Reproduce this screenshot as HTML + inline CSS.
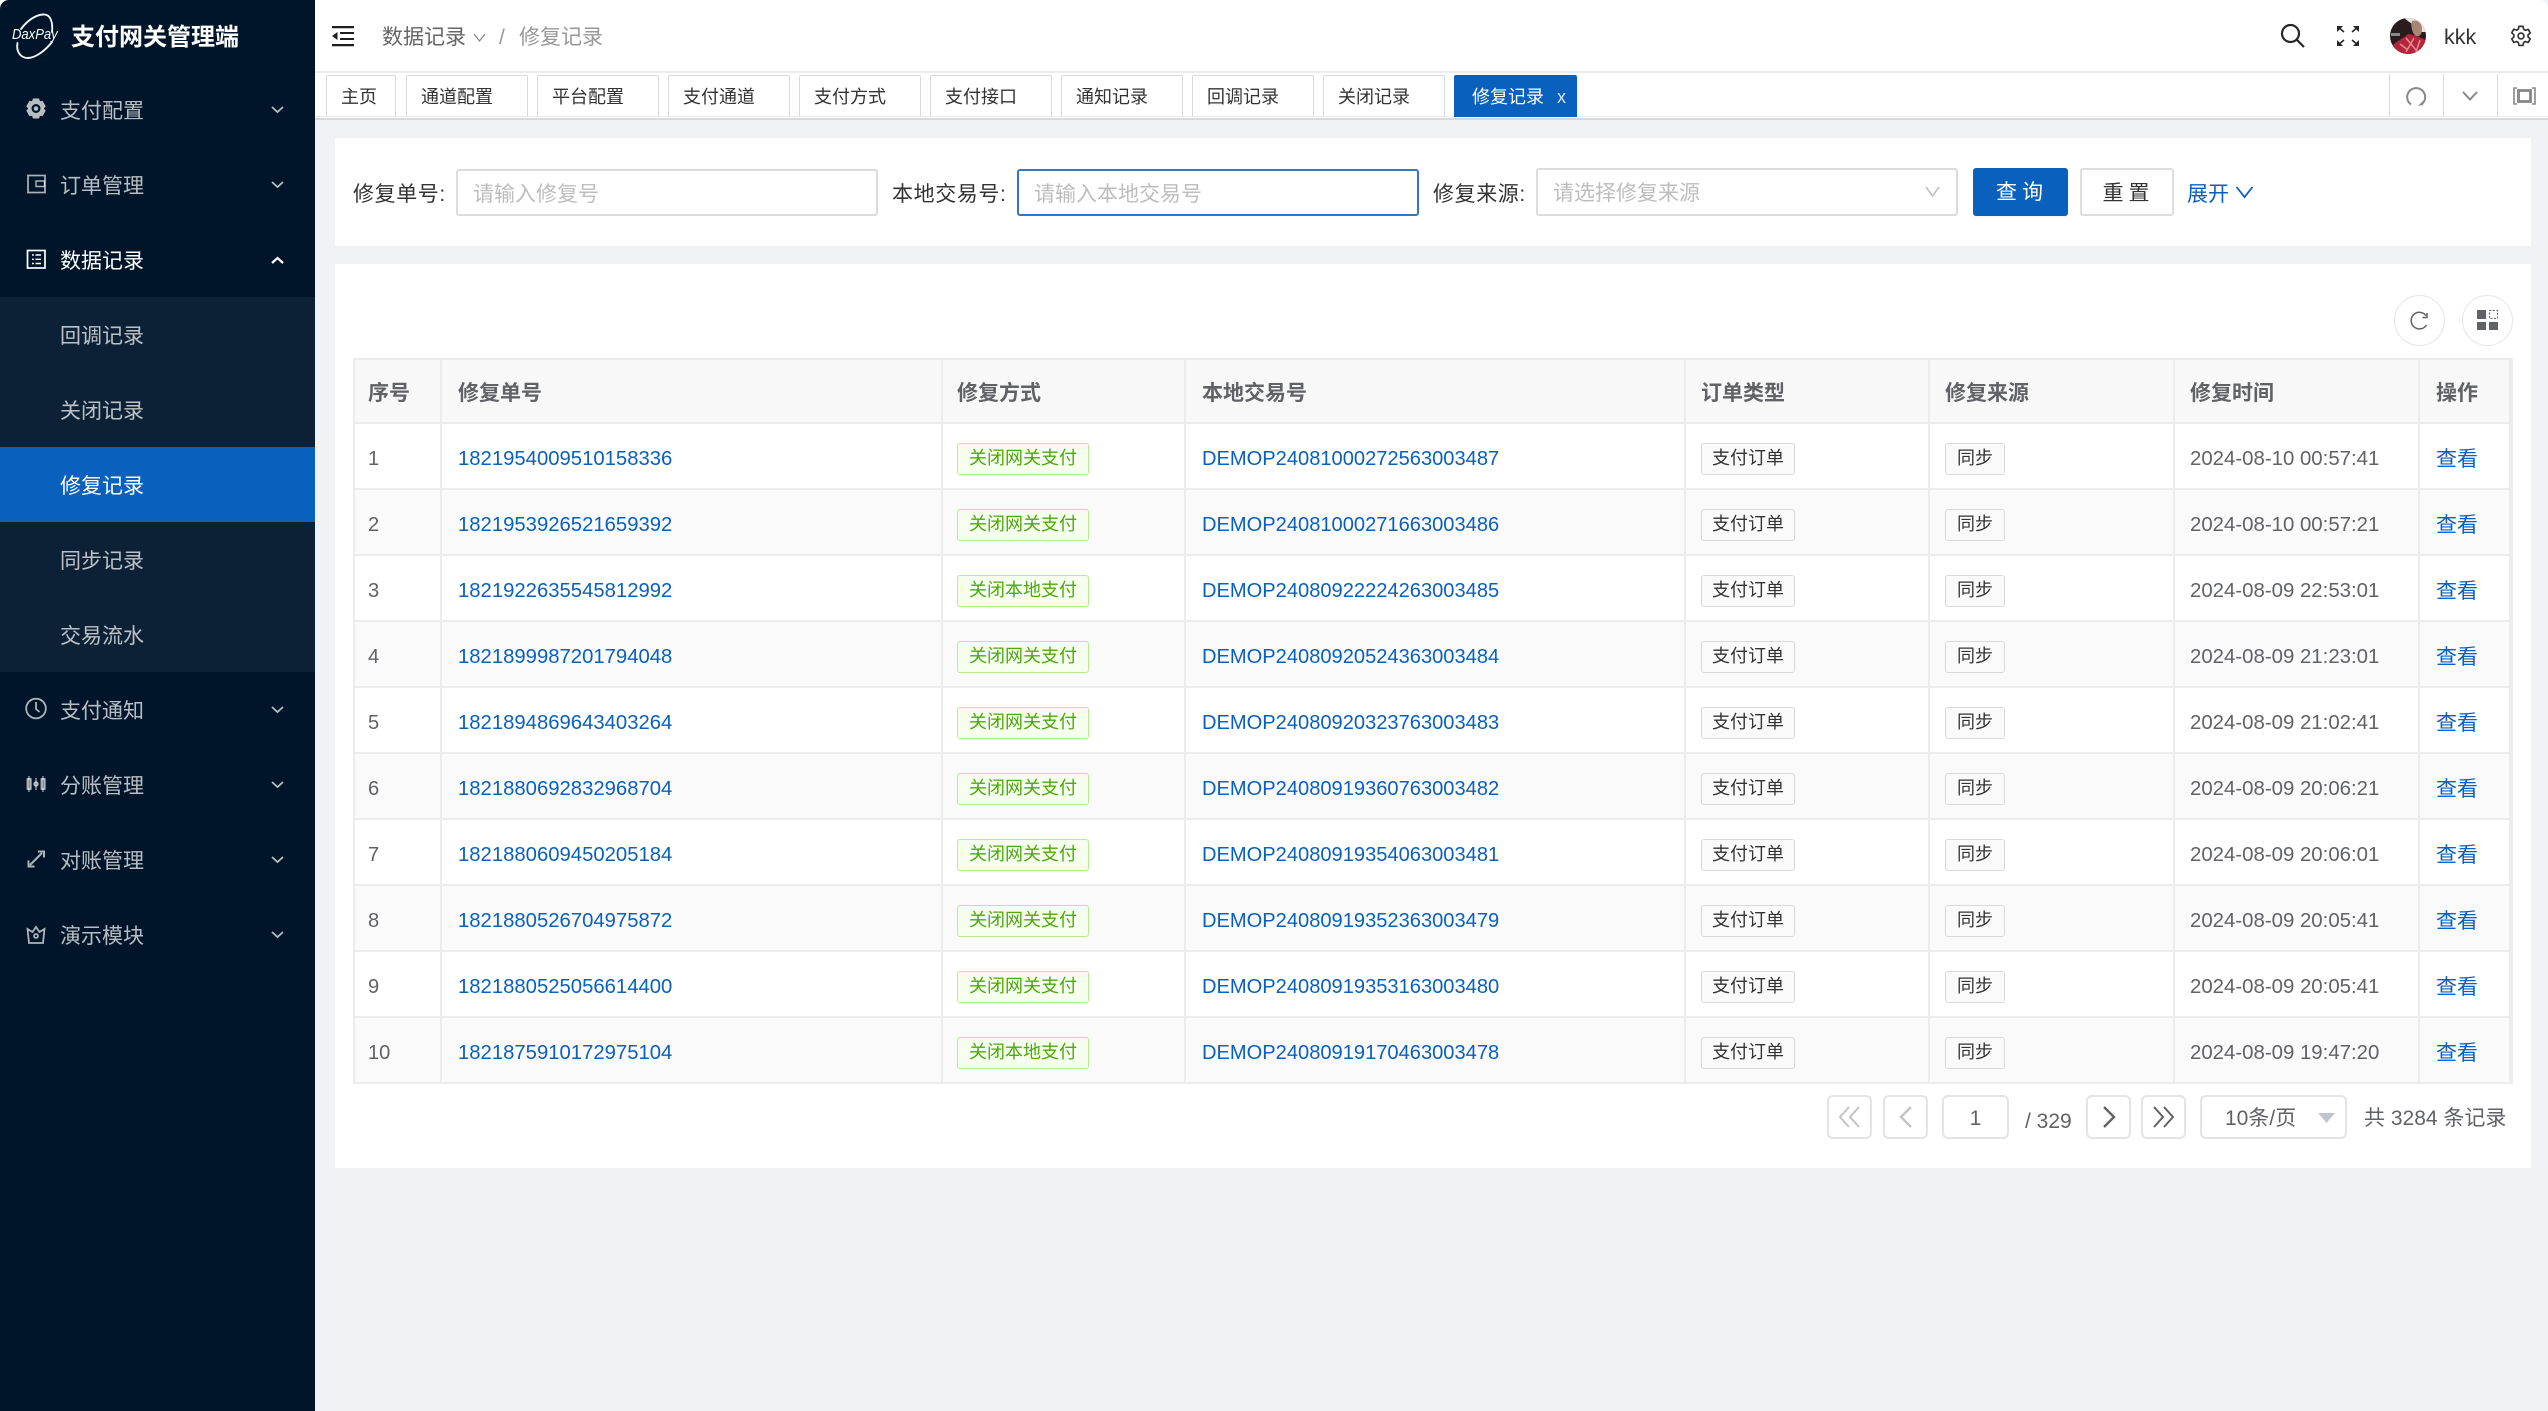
<!DOCTYPE html>
<html lang="zh-CN"><head><meta charset="utf-8"><title>支付网关管理端</title>
<style>
*{box-sizing:border-box;margin:0;padding:0}
html,body{width:2548px;height:1411px;overflow:hidden;background:#f0f2f5;font-family:"Liberation Sans","Noto Sans CJK SC",sans-serif;color:#333}
.a{position:absolute;white-space:nowrap}
svg{position:absolute;overflow:visible}
#side{position:absolute;left:0;top:0;width:315px;height:1411px;background:#001529;border-top-left-radius:9px}
#corner{position:absolute;left:0;top:0;width:12px;height:12px;background:#fff}
.m{position:absolute;left:60px;margin-top:2px;font-size:21px;line-height:30px;color:rgba(255,255,255,.72)}
.bar{position:absolute;left:0;width:315px;height:75px}
.tab{position:absolute;top:75px;height:42px;border:1px solid #d9d9d9;border-bottom-color:#e8e8e8;background:#fff;border-radius:2px 2px 0 0;font-size:18px;line-height:43px;padding-left:14px;color:#333}
.in{position:absolute;top:169px;height:47px;background:#fff;border:2px solid #dcdcdc;border-radius:3px;font-size:21px;line-height:47px;padding-left:15px;color:#bdbdbd}
.lb{position:absolute;top:180px;font-size:21px;line-height:30px;color:#333;letter-spacing:.6px}
table{position:absolute;left:353px;top:358px;width:2158px;table-layout:fixed;border-collapse:separate;border-spacing:0;background:#fff}
th,td{border-right:2px solid #ececec;border-bottom:2px solid #ececec;text-align:left;padding-left:16px;white-space:nowrap;overflow:hidden}
th{height:66px;background:#f8f8f9;font-size:21px;font-weight:bold;color:#606266;border-top:2px solid #ececec;padding-top:2px}
td{height:66px;font-size:20.100px;color:#606266;padding-top:6px}
th:first-child,td:first-child{border-left:2px solid #ececec;padding-left:13px}
th:nth-child(3),td:nth-child(3){padding-left:14px}
th:nth-child(5),td:nth-child(5),th:nth-child(6),td:nth-child(6){padding-left:15px}
th:nth-child(7),td:nth-child(7){padding-left:15px}
td:nth-child(7){font-size:20.400px}
td:nth-child(2){font-size:20.300px}
tr:nth-child(even) td{background:#fafafa}
td a{color:#0960bd;text-decoration:none}
td.v{padding-top:4px}
td.v a{font-size:21px}
.t{display:inline-block;height:32px;line-height:29px;padding:0 10px;font-size:18px;border:1px solid #d9d9d9;background:#fafafa;border-radius:3px;color:#333;vertical-align:middle}
td:nth-child(6) .t,.g{padding:0 11px}
.g{border-color:#b7eb8f;background:#f6ffed;color:#4ba80f}
.pg{position:absolute;top:1095px;height:44px;border:2px solid #e4e4e8;border-radius:6px;background:#fff;font-size:21px;line-height:44px;text-align:center;color:#606266}
</style></head><body>

<div style="position:absolute;left:315px;top:0;width:2233px;height:73px;background:#fff;border-bottom:2px solid #ececec;border-top-right-radius:9px"></div>
<div style="position:absolute;left:315px;top:73px;width:2233px;height:47px;background:#fff;border-bottom:2px solid #d9d9d9"></div>
<div style="position:absolute;left:315px;top:116px;width:2233px;height:1px;background:#ececec"></div>

<div id="corner"></div>
<div id="side">
<svg style="left:0;top:0" width="70" height="70" fill="none" stroke="#f2f3f5" stroke-width="1.900" stroke-linecap="round">
<path d="M21 29C27 21 35 15 43 14.500C51 14 53 23 52 32"/>
<path d="M17.500 43C16 51 20 58 28 58C35 58 45 51 52 42"/>
</svg>
<div class="a" style="left:12px;top:26px;font-size:14.500px;line-height:18px;font-style:italic;color:#fff;transform:scaleX(.9);transform-origin:left center">DaxPay</div>
<div class="a" style="left:71px;top:20px;font-size:24px;line-height:36px;font-weight:bold;color:#fff">支付网关管理端</div>

<div class="bar" style="top:297px;height:375px;background:#0c2135"></div>
<div class="bar" style="top:447px;background:#0960bd"></div>

<div class="m" style="top:95px">支付配置</div>
<div class="m" style="top:170px">订单管理</div>
<div class="m" style="top:245px;color:#fff">数据记录</div>
<div class="m" style="top:320px">回调记录</div>
<div class="m" style="top:395px">关闭记录</div>
<div class="m" style="top:470px;color:#fff">修复记录</div>
<div class="m" style="top:545px">同步记录</div>
<div class="m" style="top:620px">交易流水</div>
<div class="m" style="top:695px">支付通知</div>
<div class="m" style="top:770px">分账管理</div>
<div class="m" style="top:845px">对账管理</div>
<div class="m" style="top:920px">演示模块</div>

<svg style="left:0;top:0" width="315" height="960" fill="none" stroke="rgba(255,255,255,.68)" stroke-width="1.800">
<path fill-rule="evenodd" stroke="none" fill="rgba(255,255,255,.72)" d="M33 98.500h6l1 2.800 2.500-.6 3.200 5.500-1.800 2.300 1.800 2.300-3.200 5.500-2.500-.6-1 2.800h-6l-1-2.800-2.500.6-3.200-5.500 1.800-2.300-1.800-2.300 3.200-5.500 2.500.6zM36 104a4.500 4.500 0 1 0 0 9a4.500 4.500 0 0 0 0-9z"/>
<circle cx="36" cy="108.500" r="2.300" fill="rgba(255,255,255,.72)" stroke="none"/>
<rect x="28" y="175.500" width="17" height="17" stroke-width="1.700"/>
<path d="M36 181h8.500v5.500H36z" stroke-width="1.400"/>
<rect x="27.500" y="250.500" width="17.500" height="17.500" stroke="#fff" stroke-width="1.700"/>
<path d="M32 255h1.800M35.500 255h5.500M32 259.300h1.800M35.500 259.300h5.500M32 263.500h1.800M35.500 263.500h5.500" stroke="#fff" stroke-width="1.400"/>
<circle cx="36" cy="708.500" r="9.800"/><path d="M36 702v7l3.500 3"/>
<path d="M29 776v16M36 778v12M43 776v16" stroke-width="1.200"/>
<rect x="27.500" y="779" width="3.200" height="10" /><circle cx="36" cy="784" r="1.800"/><rect x="41.500" y="779" width="3.200" height="10"/>
<path d="M30 865l12-12M38 851.500h6v6M28.500 860.500v6h6" stroke-width="2"/>
<path d="M27.500 929l5 3 3.500-5 3.500 5 5-3-1.500 14h-14z"/><circle cx="36" cy="936" r="2"/>
<g stroke="rgba(255,255,255,.72)" stroke-width="1.800">
<path d="M272 107l5.500 5 5.500-5M272 182l5.500 5 5.500-5"/>
<path d="M272 263l5.500-5 5.500 5" stroke="#fff" stroke-width="2.200"/>
<path d="M272 707l5.500 5 5.500-5M272 782l5.500 5 5.500-5M272 857l5.500 5 5.500-5M272 932l5.500 5 5.500-5"/>
</g>
</svg>
</div>

<!-- header -->
<svg style="left:332px;top:26px" width="24" height="22" fill="#1f1f1f" stroke="none">
<path d="M0 0h22v2.200H0zM0 18h22v2.200H0zM8 6h14v2H8zM8 12h14v2H8zM5.500 6v8L0 10z"/>
</svg>
<div class="a" style="left:382px;top:23px;font-size:21px;line-height:30px;color:#666">数据记录</div>
<svg style="left:473px;top:33px" width="13" height="9" fill="none" stroke="#888" stroke-width="1.300"><path d="M1 1l5.500 7 5.500-7"/></svg>
<div class="a" style="left:499px;top:23px;font-size:21px;line-height:30px;color:#999">/</div>
<div class="a" style="left:519px;top:23px;font-size:21px;line-height:30px;color:#999">修复记录</div>

<svg style="left:2281px;top:24px" width="24" height="24" fill="none" stroke="#262626" stroke-width="2.200"><circle cx="9.500" cy="9.500" r="8.500"/><path d="M15.500 15.500l7.500 7.500"/></svg>
<svg style="left:2337px;top:26px" width="22" height="20" fill="#262626" stroke="#262626" stroke-width="1.600">
<path d="M1 1l6 5M21 1l-6 5M1 19l6-5M21 19l-6-5" fill="none"/>
<path stroke="none" d="M0 0h6L0 6zM22 0h-6l6 6zM0 20h6L0 14zM22 20h-6l6-6z"/>
</svg>
<svg style="left:2390px;top:18px" width="36" height="36">
<defs><clipPath id="av"><circle cx="18" cy="18" r="18"/></clipPath></defs>
<g clip-path="url(#av)">
<rect width="36" height="36" fill="#2a1c1e"/>
<path d="M14 0h22v14H30L22 6z" fill="#e8e4e0"/>
<path d="M22 3c5-2 10 2 10 8s-3 8-6 7c-3-1-6-10-4-15z" fill="#a98673"/>
<path d="M2 28c6-6 12-8 16-12 4 0 14 4 18 6v14H4z" fill="#b3263c"/>
<path d="M10 26l8 6M16 20l10 12M24 20l-8 14M30 22l-4 12" stroke="#e68c94" stroke-width="1.500" fill="none"/>
<path d="M1 15h9v3H1z" fill="#8a8a8a"/>
</g></svg>
<div class="a" style="left:2444px;top:22px;font-size:21.500px;line-height:30px;color:#333">kkk</div>
<svg style="left:2510px;top:25px" width="22" height="22" viewBox="0 0 24 24" fill="none" stroke="#333" stroke-width="1.800" stroke-linejoin="round"><circle cx="12" cy="12" r="3.200"/><path d="M9.800 1.500h4.400l.7 3.200 1.900 1.100 3.100-1 2.200 3.800-2.400 2.200v2.200l2.400 2.200-2.200 3.800-3.100-1-1.900 1.100-.7 3.200H9.800l-.7-3.200-1.900-1.100-3.100 1-2.200-3.800 2.400-2.200v-2.200L1.900 8.400l2.200-3.800 3.100 1 1.900-1.100z"/></svg>

<!-- tabs -->
<div class="tab" style="left:326px;width:70px">主页</div>
<div class="tab" style="left:406px;width:122px">通道配置</div>
<div class="tab" style="left:537px;width:122px">平台配置</div>
<div class="tab" style="left:668px;width:122px">支付通道</div>
<div class="tab" style="left:799px;width:122px">支付方式</div>
<div class="tab" style="left:930px;width:122px">支付接口</div>
<div class="tab" style="left:1061px;width:122px">通知记录</div>
<div class="tab" style="left:1192px;width:122px">回调记录</div>
<div class="tab" style="left:1323px;width:122px">关闭记录</div>
<div class="tab" style="left:1454px;width:123px;background:#0960bd;border-color:#0960bd;color:#fff;padding-left:17px">修复记录</div>
<div class="a" style="left:1557px;top:85px;font-size:18px;line-height:24px;color:#d9e6f5">x</div>

<div style="position:absolute;left:2389px;top:74px;width:1px;height:42px;background:#d9d9d9"></div>
<div style="position:absolute;left:2443px;top:74px;width:1px;height:42px;background:#d9d9d9"></div>
<div style="position:absolute;left:2497px;top:74px;width:1px;height:42px;background:#d9d9d9"></div>
<svg style="left:2406px;top:87px" width="20" height="20" fill="none" stroke="#888" stroke-width="2"><path d="M5 17.500A9 9 0 1 1 16 17"/><path d="M12 19l5-1 1-5" stroke-width="0" fill="#888"/></svg>
<svg style="left:2462px;top:91px" width="16" height="10" fill="none" stroke="#888" stroke-width="2"><path d="M1 1l7 7.500L15 1"/></svg>
<svg style="left:2513px;top:87px" width="23" height="18" fill="none" stroke="#888" stroke-width="1.600"><path d="M4 1H1v16h3M19 1h3v16h-3"/><rect x="5.500" y="3.500" width="12" height="11" stroke-width="2.800"/></svg>

<!-- search card -->
<div style="position:absolute;left:335px;top:138px;width:2196px;height:108px;background:#fff"></div>
<div class="lb" style="left:353px">修复单号:</div>
<div class="in" style="left:456px;width:422px">请输入修复号</div>
<div class="lb" style="left:892px">本地交易号:</div>
<div class="in" style="left:1017px;width:402px;border-color:#2f78c4">请输入本地交易号</div>
<div class="lb" style="left:1433px">修复来源:</div>
<div class="in" style="left:1536px;top:168px;height:48px;width:422px">请选择修复来源</div>
<svg style="left:1925px;top:186px" width="15" height="11" fill="none" stroke="#bfbfbf" stroke-width="1.500"><path d="M1 1l6.500 9L14 1"/></svg>
<div class="a" style="left:1973px;top:168px;width:95px;height:48px;background:#0960bd;border-radius:3px;color:#fff;font-size:21px;line-height:50px;text-align:center;letter-spacing:5px;padding-left:3px;box-shadow:0 2px 0 rgba(0,0,0,.03)">查询</div>
<div class="a" style="left:2080px;top:168px;width:94px;height:48px;background:#fff;border:2px solid #dedede;border-radius:3px;color:#333;font-size:21px;line-height:47px;text-align:center;letter-spacing:5px;padding-left:3px">重置</div>
<div class="a" style="left:2187px;top:180px;font-size:21px;line-height:30px;color:#0960bd">展开</div>
<svg style="left:2235px;top:186px" width="19" height="13" fill="none" stroke="#0960bd" stroke-width="1.800"><path d="M1.500 1l8 10 8-10"/></svg>

<!-- table card -->
<div style="position:absolute;left:335px;top:264px;width:2196px;height:904px;background:#fff"></div>
<div style="position:absolute;left:2394px;top:295px;width:51px;height:51px;border:1.500px solid #e4e4ea;border-radius:50%"></div>
<div style="position:absolute;left:2462px;top:295px;width:51px;height:51px;border:1.500px solid #e4e4ea;border-radius:50%"></div>
<svg style="left:2409px;top:312px" width="20" height="19" fill="none" stroke="#606266" stroke-width="1.500"><path d="M17 3.500A8.300 8.300 0 1 0 17.500 13"/><path d="M18 1v4.500h-4.500" /></svg>
<svg style="left:2477px;top:310px" width="21" height="20"><path d="M0 0h9v9H0zM0 12h9v8H0zM12 12h9v8h-9z" fill="#606266"/><rect x="12.500" y=".5" width="8" height="8" fill="none" stroke="#606266" stroke-dasharray="2 1.500"/></svg>

<table>
<colgroup><col style="width:89px"><col style="width:501px"><col style="width:243px"><col style="width:500px"><col style="width:244px"><col style="width:245px"><col style="width:245px"><col style="width:91px"></colgroup>
<thead><tr><th>序号</th><th>修复单号</th><th>修复方式</th><th>本地交易号</th><th>订单类型</th><th>修复来源</th><th>修复时间</th><th>操作</th></tr></thead>
<tbody>
<tr><td>1</td><td><a>1821954009510158336</a></td><td><span class="t g">关闭网关支付</span></td><td><a>DEMOP24081000272563003487</a></td><td><span class="t">支付订单</span></td><td><span class="t">同步</span></td><td>2024-08-10 00:57:41</td><td class="v"><a>查看</a></td></tr>
<tr><td>2</td><td><a>1821953926521659392</a></td><td><span class="t g">关闭网关支付</span></td><td><a>DEMOP24081000271663003486</a></td><td><span class="t">支付订单</span></td><td><span class="t">同步</span></td><td>2024-08-10 00:57:21</td><td class="v"><a>查看</a></td></tr>
<tr><td>3</td><td><a>1821922635545812992</a></td><td><span class="t g">关闭本地支付</span></td><td><a>DEMOP24080922224263003485</a></td><td><span class="t">支付订单</span></td><td><span class="t">同步</span></td><td>2024-08-09 22:53:01</td><td class="v"><a>查看</a></td></tr>
<tr><td>4</td><td><a>1821899987201794048</a></td><td><span class="t g">关闭网关支付</span></td><td><a>DEMOP24080920524363003484</a></td><td><span class="t">支付订单</span></td><td><span class="t">同步</span></td><td>2024-08-09 21:23:01</td><td class="v"><a>查看</a></td></tr>
<tr><td>5</td><td><a>1821894869643403264</a></td><td><span class="t g">关闭网关支付</span></td><td><a>DEMOP24080920323763003483</a></td><td><span class="t">支付订单</span></td><td><span class="t">同步</span></td><td>2024-08-09 21:02:41</td><td class="v"><a>查看</a></td></tr>
<tr><td>6</td><td><a>1821880692832968704</a></td><td><span class="t g">关闭网关支付</span></td><td><a>DEMOP24080919360763003482</a></td><td><span class="t">支付订单</span></td><td><span class="t">同步</span></td><td>2024-08-09 20:06:21</td><td class="v"><a>查看</a></td></tr>
<tr><td>7</td><td><a>1821880609450205184</a></td><td><span class="t g">关闭网关支付</span></td><td><a>DEMOP24080919354063003481</a></td><td><span class="t">支付订单</span></td><td><span class="t">同步</span></td><td>2024-08-09 20:06:01</td><td class="v"><a>查看</a></td></tr>
<tr><td>8</td><td><a>1821880526704975872</a></td><td><span class="t g">关闭网关支付</span></td><td><a>DEMOP24080919352363003479</a></td><td><span class="t">支付订单</span></td><td><span class="t">同步</span></td><td>2024-08-09 20:05:41</td><td class="v"><a>查看</a></td></tr>
<tr><td>9</td><td><a>1821880525056614400</a></td><td><span class="t g">关闭网关支付</span></td><td><a>DEMOP24080919353163003480</a></td><td><span class="t">支付订单</span></td><td><span class="t">同步</span></td><td>2024-08-09 20:05:41</td><td class="v"><a>查看</a></td></tr>
<tr><td>10</td><td><a>1821875910172975104</a></td><td><span class="t g">关闭本地支付</span></td><td><a>DEMOP24080919170463003478</a></td><td><span class="t">支付订单</span></td><td><span class="t">同步</span></td><td>2024-08-09 19:47:20</td><td class="v"><a>查看</a></td></tr>
</tbody></table>
<div style="position:absolute;left:2511px;top:358px;width:2px;height:726px;background:#ececec"></div>

<!-- pagination -->
<div class="pg" style="left:1827px;width:45px"></div>
<div class="pg" style="left:1883px;width:45px"></div>
<div class="pg" style="left:1942px;width:67px">1</div>
<div class="a" style="left:2025px;top:1107px;font-size:21px;line-height:30px;color:#606266">/ 329</div>
<div class="pg" style="left:2086px;width:45px"></div>
<div class="pg" style="left:2141px;width:45px"></div>
<div class="pg" style="left:2200px;width:147px;text-align:left;padding-left:23px">10条/页</div>
<svg style="left:1838px;top:1106px" width="24" height="22" fill="none" stroke="#c4c4c4" stroke-width="2"><path d="M11 1L2 11l9 10M21 1l-9 10 9 10"/></svg>
<svg style="left:1899px;top:1106px" width="14" height="22" fill="none" stroke="#c4c4c4" stroke-width="2.400"><path d="M12 1L2 11l10 10"/></svg>
<svg style="left:2102px;top:1106px" width="14" height="22" fill="none" stroke="#606266" stroke-width="2.400"><path d="M2 1l10 10L2 21"/></svg>
<svg style="left:2152px;top:1106px" width="24" height="22" fill="none" stroke="#606266" stroke-width="2"><path d="M2 1l9 10-9 10M12 1l9 10-9 10"/></svg>
<svg style="left:2318px;top:1113px" width="18" height="10"><path d="M0 0h17L8.500 10z" fill="#c0c4cc"/></svg>
<div class="a" style="left:2364px;top:1104px;font-size:21px;line-height:30px;color:#606266">共 3284 条记录</div>

</body></html>
